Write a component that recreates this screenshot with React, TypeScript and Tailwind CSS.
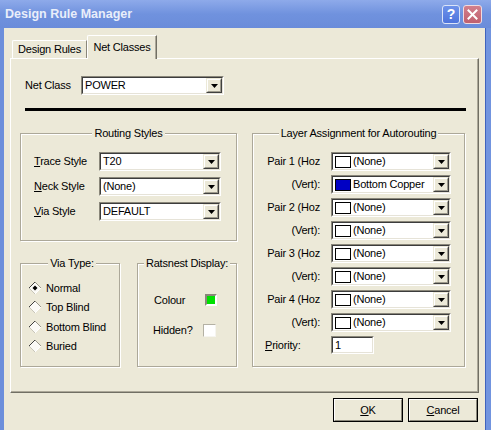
import React from 'react';

type ComboProps = { width: string; value: string; swatch?: string };

const layerRows = [
  { label: 'Pair 1 (Hoz', value: '(None)', swatch: 'bg-white' },
  { label: '(Vert):', value: 'Bottom Copper', swatch: 'bg-[#0000c4]' },
  { label: 'Pair 2 (Hoz', value: '(None)', swatch: 'bg-white' },
  { label: '(Vert):', value: '(None)', swatch: 'bg-white' },
  { label: 'Pair 3 (Hoz', value: '(None)', swatch: 'bg-white' },
  { label: '(Vert):', value: '(None)', swatch: 'bg-white' },
  { label: 'Pair 4 (Hoz', value: '(None)', swatch: 'bg-white' },
  { label: '(Vert):', value: '(None)', swatch: 'bg-white' },
];

const viaTypes = ['Normal', 'Top Blind', 'Bottom Blind', 'Buried'];

function Sunken({ className, children }: { className: string; children?: React.ReactNode }) {
  return (
    <div className={`border border-t-[#8a877a] border-l-[#8a877a] border-r-white border-b-white ${className}`}>
      <div className="h-full flex items-center border border-t-[#3c3c3c] border-l-[#3c3c3c] border-r-[#e6e3d8] border-b-[#e6e3d8] bg-white">
        {children}
      </div>
    </div>
  );
}

function DropButton() {
  return (
    <div className="ml-auto h-full w-[16px] shrink-0 border border-t-[#ece9d8] border-l-[#ece9d8] border-r-[#404040] border-b-[#404040]">
      <div className="h-full w-full flex items-center justify-center bg-[#ece9d8] border border-t-white border-l-white border-r-[#9d9a8c] border-b-[#9d9a8c]">
        <svg width="7" height="4" viewBox="0 0 7 4">
          <path d="M0 0h7L3.5 4z" fill="#000" />
        </svg>
      </div>
    </div>
  );
}

function Combo({ width, value, swatch }: ComboProps) {
  return (
    <Sunken className={`${width} h-[19px] shrink-0`}>
      {swatch && <span className={`ml-[2px] w-[16px] h-[12px] shrink-0 border border-black ${swatch}`} />}
      <span className="ml-[2px] whitespace-nowrap">{value}</span>
      <DropButton />
    </Sunken>
  );
}

function Radio({ checked }: { checked?: boolean }) {
  return (
    <svg width="14" height="14" viewBox="0 0 14 14" className="shrink-0">
      <polygon points="7,1 13,7 7,13 1,7" fill="#fbfaf6" />
      <polyline points="1,7 7,1" stroke="#404040" fill="none" />
      <polyline points="7,1 13,7" stroke="#9a978a" fill="none" />
      <polyline points="1,7 7,13" stroke="#c8c5b8" fill="none" />
      <polyline points="7,13 13,7" stroke="#ffffff" fill="none" />
      {checked && <polygon points="7,4.5 9.5,7 7,9.5 4.5,7" fill="#000" />}
    </svg>
  );
}

function Group({ title, className, children }: { title: string; className: string; children: React.ReactNode }) {
  return (
    <fieldset className={`min-w-0 border border-[#aca899] shadow-[inset_1px_1px_0_#fff,1px_1px_0_#fff] ${className}`}>
      <legend className="mx-auto px-[2px] leading-[13px] whitespace-nowrap bg-[#ece9d8]">{title}</legend>
      {children}
    </fieldset>
  );
}

function Button({ children }: { children: React.ReactNode }) {
  return (
    <button className="w-[70px] h-[24px] border border-black bg-[#ece9d8]">
      <div className="h-full flex items-center justify-center border border-t-white border-l-white border-r-[#8a877a] border-b-[#8a877a]">
        {children}
      </div>
    </button>
  );
}

export default function App() {
  return (
    <div className="w-[491px] h-[430px] overflow-hidden flex flex-col font-['Liberation_Sans',Arial,sans-serif] text-[11px] tracking-[-0.2px] text-black">
      {/* title bar */}
      <div className="h-[28px] shrink-0 flex items-center bg-gradient-to-b from-[#8eaaea] via-[#7092de] to-[#6a8cda]">
        <span className="pl-[5px] font-bold text-[12.5px] tracking-normal text-[#e9eefa]">Design Rule Manager</span>
        <div className="ml-auto mr-[9px] flex items-center gap-[3px]">
          <div className="w-[18px] h-[19px] rounded-[3px] border border-[#dbe4f8] bg-gradient-to-b from-[#6e92ea] to-[#4e74dc] flex items-center justify-center text-white font-bold text-[14px]">?</div>
          <div className="w-[19px] h-[19px] rounded-[3px] border border-[#f0dbe0] bg-gradient-to-b from-[#d27f8c] to-[#c0606e] flex items-center justify-center">
            <svg width="11" height="11" viewBox="0 0 11 11">
              <path d="M1.5 1.5l8 8M9.5 1.5l-8 8" stroke="#fff" strokeWidth="2" strokeLinecap="square" />
            </svg>
          </div>
        </div>
      </div>

      <div className="flex-1 flex">
        <div className="w-[4px] bg-[#6d8fdb]" />
        <div className="flex-1 bg-[#ece9d8] flex flex-col">
          {/* tabs */}
          <div className="h-[30px] shrink-0 flex items-end pl-[8px]">
            <div className="w-[75px] h-[18px] flex items-center justify-center rounded-tl-[2px] border-t border-l border-white border-r border-r-[#8a877a]">
              Design Rules
            </div>
            <div className="relative z-10 -mb-px w-[70px] h-[24px] flex items-center justify-center pb-px rounded-tl-[2px] bg-[#ece9d8] border-t border-l border-white border-r border-r-[#716f64] shadow-[inset_-1px_0_0_#aca899]">
              Net Classes
            </div>
          </div>

          {/* tab panel */}
          <div className="ml-[6px] w-[469px] h-[335px] shrink-0 border border-t-white border-l-white border-r-[#716f64] border-b-[#716f64] shadow-[inset_-1px_-1px_0_#aca899]">
            <div className="mt-[17px] ml-[14px] flex items-center">
              <span className="w-[56px]">Net Class</span>
              <Combo width="w-[143px]" value="POWER" />
            </div>
            <div className="mt-[13px] ml-[14px] w-[441px] h-[3px] bg-black" />

            <div className="mt-[16px] ml-[9px] flex gap-[15px]">
              <div className="w-[217px] flex flex-col gap-[16px]">
                <Group title="Routing Styles" className="h-[114px] pt-[12px]">
                  <div className="pl-[13px] flex flex-col gap-[6px]">
                    {[
                      { key: 'T', rest: 'race Style', value: 'T20' },
                      { key: 'N', rest: 'eck Style', value: '(None)' },
                      { key: 'V', rest: 'ia Style', value: 'DEFAULT' },
                    ].map(r => (
                      <div key={r.rest} className="flex items-center">
                        <span className="w-[65px]"><u>{r.key}</u>{r.rest}</span>
                        <Combo width="w-[122px]" value={r.value} />
                      </div>
                    ))}
                  </div>
                </Group>

                <div className="flex gap-[17px]">
                  <Group title="Via Type:" className="w-[100px] h-[110px] pt-[8px] pl-[4px]">
                    <div className="pl-[3px]">
                      {viaTypes.map((v, i) => (
                        <div key={v} className="h-[19.5px] flex items-center gap-[4px]">
                          <Radio checked={i === 0} />
                          <span>{v}</span>
                        </div>
                      ))}
                    </div>
                  </Group>
                  <Group title="Ratsnest Display:" className="w-[100px] h-[110px] pt-[20px]">
                    <div className="pl-[16px]">
                      <div className="h-[20px] flex items-center">
                        <span className="w-[51px]">Colour</span>
                        <div className="w-[12px] h-[12px] border-2 border-t-[#8a877a] border-l-[#8a877a] border-r-white border-b-white bg-[#00e000]" />
                      </div>
                      <div className="mt-[10px] -ml-px h-[20px] flex items-center">
                        <span className="w-[50px]">Hidden?</span>
                        <div className="w-[13px] h-[13px] border border-t-[#b4b1a4] border-l-[#b4b1a4] border-r-[#f6f5f0] border-b-[#f6f5f0] bg-white" />
                      </div>
                    </div>
                  </Group>
                </div>
              </div>

              <Group title="Layer Assignment for Autorouting" className="w-[213px] h-[240px] pt-[12px]">
                <div className="pl-[12px] flex flex-col gap-[4px]">
                  {layerRows.map((r, i) => (
                    <div key={i} className="flex items-center">
                      <span className="w-[55px] text-right whitespace-nowrap">{r.label}</span>
                      <div className="ml-[11px]">
                        <Combo width="w-[120px]" value={r.value} swatch={r.swatch} />
                      </div>
                    </div>
                  ))}
                  <div className="flex items-center">
                    <span className="w-[55px]"><u>P</u>riority:</span>
                    <Sunken className="ml-[11px] w-[43px] h-[18px]">
                      <span className="ml-[2px]">1</span>
                    </Sunken>
                  </div>
                </div>
              </Group>
            </div>
          </div>

          {/* dialog buttons */}
          <div className="mt-[5px] pr-[7px] flex justify-end gap-[5px]">
            <Button><span><u>O</u>K</span></Button>
            <Button><span><u>C</u>ancel</span></Button>
          </div>
        </div>
        <div className="w-[6px] border-l border-[#3f63bd] bg-[#7194df]" />
      </div>
    </div>
  );
}
